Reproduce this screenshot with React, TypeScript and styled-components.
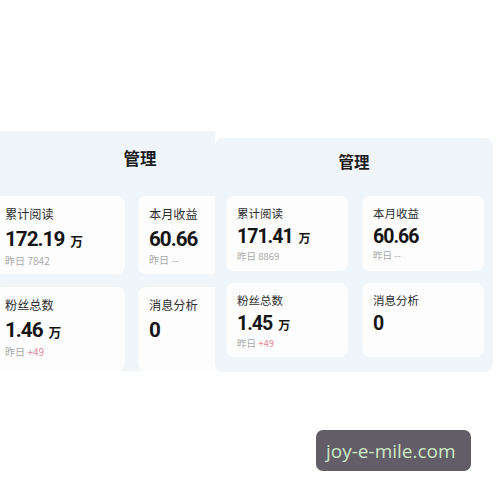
import React from "react";
import styled, { createGlobalStyle } from "styled-components";

const GlobalStyle = createGlobalStyle`
  html, body {
    margin: 0;
    padding: 0;
    background: #ffffff;
  }
  body {
    font-family: "Noto Sans CJK SC", "Noto Sans", sans-serif;
  }
`;

const Page = styled.div`
  position: relative;
  width: 500px;
  height: 500px;
  overflow: hidden;
  background: #ffffff;
`;

const Shots = styled.div`
  display: flex;
  align-items: flex-start;
  padding-top: 131px;
`;

const Clip = styled.div`
  width: 215px;
  height: 240px;
  overflow: hidden;
  flex-shrink: 0;
`;

const Panel = styled.section<{ $w: number; $h: number; $ml: number; $pt: number; $pl: number }>`
  box-sizing: border-box;
  width: ${({ $w }) => $w}px;
  height: ${({ $h }) => $h}px;
  margin-left: ${({ $ml }) => $ml}px;
  padding: ${({ $pt }) => $pt}px 0 0 ${({ $pl }) => $pl}px;
  background: #eff5f8;
  border-radius: 8px;
  flex-shrink: 0;
`;

const RightShot = styled(Panel)`
  margin-top: 7px;
`;

const Title = styled.h2<{ $size: number; $gap: number; $pl: number; $w: number }>`
  width: ${({ $w }) => $w}px;
  margin: 0 0 ${({ $gap }) => $gap}px -${({ $pl }) => $pl}px;
  text-align: center;
  font-size: ${({ $size }) => $size}px;
  line-height: 20px;
  font-weight: 700;
  color: #1c1c1c;
`;

const Grid = styled.div<{ $col: number; $row1: number; $row2: number; $cgap: number; $rgap: number }>`
  display: grid;
  grid-template-columns: ${({ $col }) => $col}px ${({ $col }) => $col}px;
  grid-template-rows: ${({ $row1 }) => $row1}px ${({ $row2 }) => $row2}px;
  column-gap: ${({ $cgap }) => $cgap}px;
  row-gap: ${({ $rgap }) => $rgap}px;
`;

const Card = styled.div<{ $pt: number }>`
  box-sizing: border-box;
  background: #fdfdfd;
  border-radius: 8px;
  padding: ${({ $pt }) => $pt}px 11px 0;
  display: flex;
  flex-direction: column;
`;

const Label = styled.div<{ $s: number }>`
  font-size: ${({ $s }) => 11.5 * $s}px;
  line-height: ${({ $s }) => 16 * $s}px;
  color: #2e2e2e;
`;

const Value = styled.div<{ $s: number }>`
  margin-top: ${({ $s }) => 4 * $s}px;
  font-family: "Roboto", "Liberation Sans", sans-serif;
  font-weight: 700;
  font-size: ${({ $s }) => 19.5 * $s}px;
  line-height: ${({ $s }) => 24 * $s}px;
  letter-spacing: -1px;
  color: #151515;
  display: flex;
  align-items: baseline;
  gap: 6px;
`;

const Unit = styled.span<{ $s: number }>`
  font-family: "Noto Sans CJK SC", sans-serif;
  font-size: ${({ $s }) => 12 * $s}px;
  font-weight: 700;
  letter-spacing: 0;
`;

const Sub = styled.div<{ $s: number }>`
  font-size: ${({ $s }) => 9.5 * $s}px;
  line-height: ${({ $s }) => 13 * $s}px;
  color: #a9a9a9;
`;

const Up = styled.span`
  color: #e3899b;
`;

const Watermark = styled.div`
  position: absolute;
  left: 316px;
  top: 430px;
  width: 155px;
  height: 41px;
  box-sizing: border-box;
  padding-left: 10px;
  display: flex;
  align-items: center;
  background: #625d66;
  border-radius: 7px;
  font-family: "Open Sans", "DejaVu Sans", sans-serif;
  font-size: 19px;
  color: #cbe8c5;
`;

type Stat = { label: string; value: string; unit?: string; sub?: string; up?: boolean };

const StatCard: React.FC<{ stat: Stat; s: number; pt: number }> = ({ stat, s, pt }) => (
  <Card $pt={pt}>
    <Label $s={s}>{stat.label}</Label>
    <Value $s={s}>
      {stat.value}
      {stat.unit && <Unit $s={s}>{stat.unit}</Unit>}
    </Value>
    {stat.sub && (
      <Sub $s={s}>
        昨日 {stat.up ? <Up>{stat.sub}</Up> : stat.sub}
      </Sub>
    )}
  </Card>
);

const leftStats: Stat[] = [
  { label: "累计阅读", value: "172.19", unit: "万", sub: "7842" },
  { label: "本月收益", value: "60.66", sub: "--" },
  { label: "粉丝总数", value: "1.46", unit: "万", sub: "+49", up: true },
  { label: "消息分析", value: "0" },
];

const rightStats: Stat[] = [
  { label: "累计阅读", value: "171.41", unit: "万", sub: "8869" },
  { label: "本月收益", value: "60.66", sub: "--" },
  { label: "粉丝总数", value: "1.45", unit: "万", sub: "+49", up: true },
  { label: "消息分析", value: "0" },
];

const App: React.FC = () => (
  <Page>
    <GlobalStyle />
    <Shots>
      <Clip>
        <Panel $w={314} $h={260} $ml={-17} $pt={17} $pl={11}>
          <Title $size={16.5} $gap={28} $pl={11} $w={314}>管理</Title>
          <Grid $col={131} $row1={78} $row2={84} $cgap={13} $rgap={13}>
            {leftStats.map((st, i) => (
              <StatCard key={i} stat={st} s={1.06} pt={10} />
            ))}
          </Grid>
        </Panel>
      </Clip>
      <RightShot $w={278} $h={234} $ml={0} $pt={13} $pl={11}>
        <Title $size={15.5} $gap={25} $pl={11} $w={278}>管理</Title>
        <Grid $col={122} $row1={75} $row2={74} $cgap={14} $rgap={12}>
          {rightStats.map((st, i) => (
            <StatCard key={i} stat={st} s={1} pt={9} />
          ))}
        </Grid>
      </RightShot>
    </Shots>
    <Watermark>joy-e-mile.com</Watermark>
  </Page>
);

export default App;
